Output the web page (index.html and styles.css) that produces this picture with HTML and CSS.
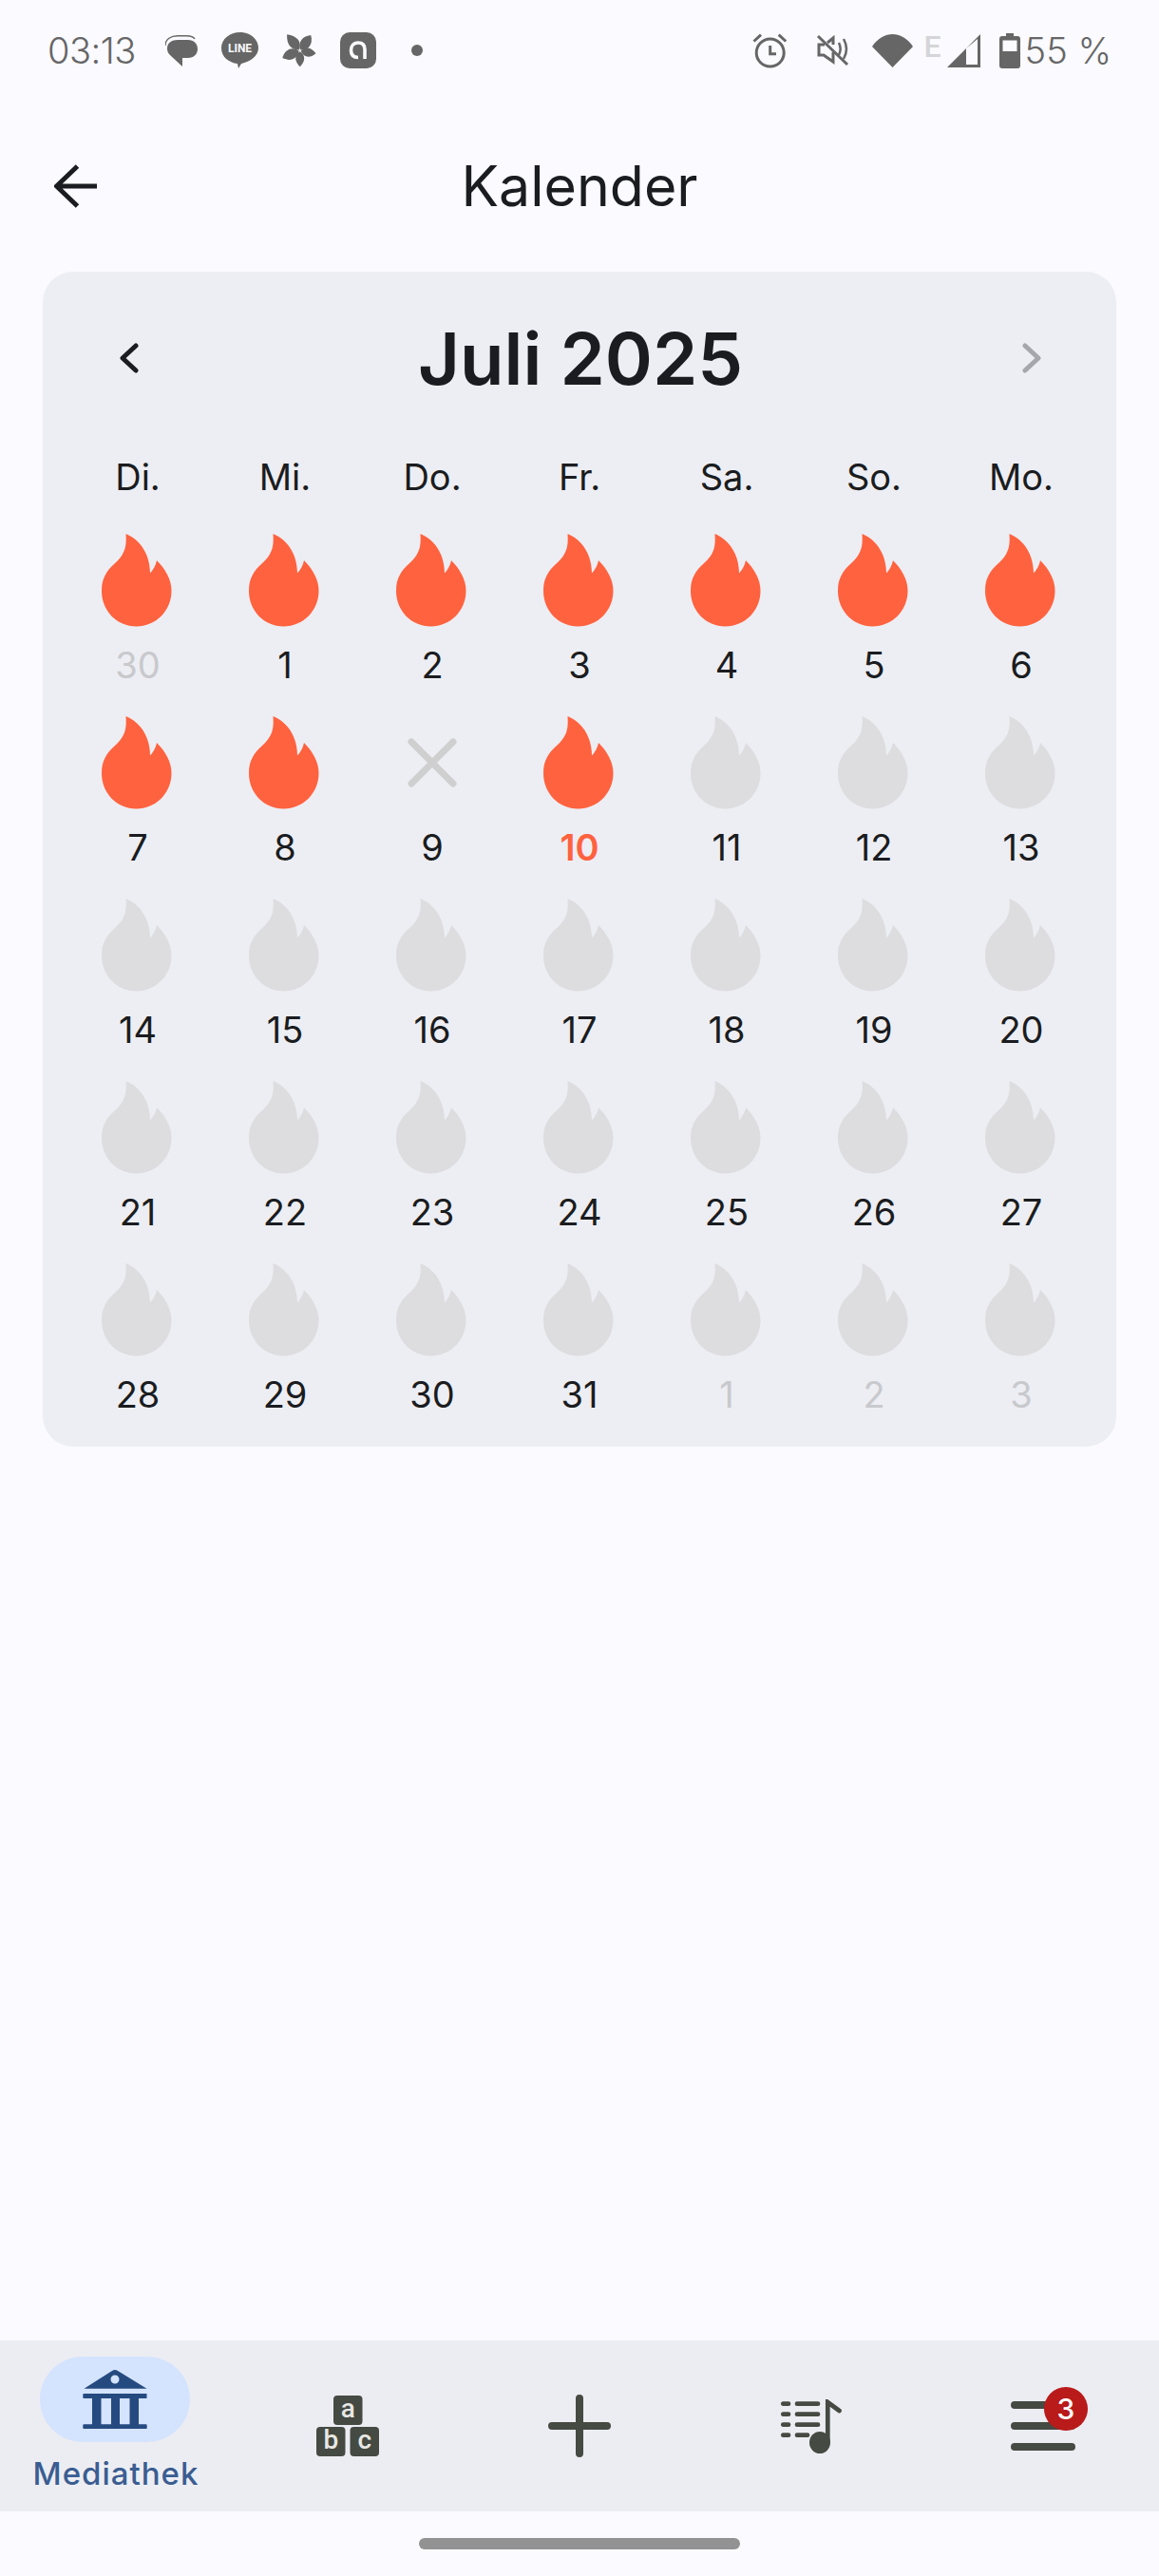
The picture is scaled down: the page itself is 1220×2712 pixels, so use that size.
FILE: index.html
```html
<!doctype html>
<html lang="de">
<head>
<meta charset="UTF-8" />
<meta name="viewport" content="width=device-width,initial-scale=1" />
<title>Kalender</title>
<link rel="stylesheet" href="styles.css">
</head>
<body>

<svg class="defs" width="0" height="0">
	<symbol id="flame" viewBox="0 0 74 98">
		<path d="M25.5 0C26 10 26.5 20 14 31C5 39 0 47 0 60C0 81 16 97.5 36.5 97.5C57 97.5 73.5 81 73.5 60C73.5 48 67 37 58 28C57 33 54.5 38 51 41.5C51 23 42 7 25.5 0Z" />
	</symbol>
</svg>

<div class="status">
	<span class="status-time">03:13</span>
	<svg class="st-chat" width="34" height="33" viewBox="0 0 34 33"><path d="M0 11C0 4 6 .7 13 .7H22C27 .7 30 2 31 4" fill="none" stroke="#666" stroke-width="1.4"/><path d="M2 14C2 8 7 5 13 5H24C30 5 34 9 34 14.500C34 20 30 24 24 24H18V33L5 21C3 19 2 17 2 14Z" fill="#666"/></svg>
	<svg class="st-line" width="39" height="38" viewBox="0 0 39 38"><path d="M19.500 0C30 0 39 7 39 16.500C39 25 30 31 21 33L18 38L17 33C8 32 0 26 0 16.500C0 7 9 0 19.500 0Z" fill="#666"/><text x="19.500" y="21" text-anchor="middle" class="line-text">LINE</text></svg>
	<svg class="st-flower" width="37" height="36" viewBox="-18.700 -18.300 37 36">
		<g fill="#666">
			<path d="M0 -1C-7 -6 -8 -13 -1 -21.700C7 -14 7 -6 0 -1Z" transform="rotate(-36)"/>
			<path d="M0 -1C-7 -6 -8 -13 -1 -20C7 -14 7 -6 0 -1Z" transform="rotate(38)"/>
			<path d="M0 -1C-6 -5 -6 -11 -1 -17C6 -12 6 -5 0 -1Z" transform="rotate(103)"/>
			<path d="M0 -1C-6 -5 -6 -11 0 -17C6 -11 6 -5 0 -1Z" transform="rotate(180)"/>
			<path d="M0 -1C-7 -6 -8 -13 -1 -20C7 -14 7 -6 0 -1Z" transform="rotate(250)"/>
		</g>
	</svg>
	<svg class="st-app" width="38" height="38" viewBox="0 0 38 38"><rect width="38" height="38" rx="10" fill="#666"/><path d="M26 28V18C26 13 23 11 19 11C14 11 11.500 15 11.500 19C11.500 24 14 26.500 19 26.500" fill="none" stroke="#fafaff" stroke-width="3.600"/></svg>
	<span class="st-dot"></span>

	<span class="status-right">
		<svg class="st-alarm" width="37" height="37" viewBox="0 0 37 37"><g fill="none" stroke="#666" stroke-width="3"><circle cx="18.700" cy="20.500" r="14.500"/><path d="M1.500 8.500L9 1.700M27.700 1.700L35.200 8.500M18.700 13V21.700H25"/></g></svg>
		<svg class="st-mute" width="36" height="34" viewBox="0 0 36 34"><g fill="none" stroke="#666" stroke-width="3"><path d="M2 2L33 32"/><path d="M9 11H3V22H8L18 29V19M12 9L18 4V11"/><path d="M24 9C26 13 26 18 24 22M29 5C33 12 33 19 29 26" stroke-width="2.500"/></g></svg>
		<svg class="st-wifi" width="43" height="35" viewBox="0 0 43 35"><path d="M0 13C6 4 14 0 21.500 0C29 0 37 4 43 13L21.500 35Z" fill="#666"/></svg>
		<span class="st-e">E</span>
		<svg class="st-signal" width="35" height="35" viewBox="0 0 35 35"><path d="M35 0V35H0ZM20 15V32H32V5Z" fill="#666" fill-rule="evenodd"/></svg>
		<svg class="st-batt" width="22" height="37" viewBox="0 0 22 37"><path d="M7 0H15V3H19C21 3 22 4 22 6V34C22 36 21 37 19 37H3C1 37 0 36 0 34V6C0 4 1 3 3 3H7ZM3.500 7.500V19H18.500V7.500Z" fill="#666" fill-rule="evenodd"/></svg>
		<span class="status-batt">55 %</span>
	</span>
</div>

<div class="header">
	<svg class="back" width="46" height="46" viewBox="0 0 46 46"><path d="M2.500 23H45M24.500 2L2.500 23L24.500 44" fill="none" stroke="#1a1c20" stroke-width="5"/></svg>
	<h1 class="header-title">Kalender</h1>
</div>

<div class="main">
	<div class="card">
		<div class="month">
			<svg class="chev" width="20" height="32" viewBox="0 0 20 32"><path d="M17 3L3 16L17 29" fill="none" stroke="#1a1c20" stroke-width="5" stroke-linecap="round" stroke-linejoin="round"/></svg>
			<h2 class="month-title">Juli 2025</h2>
			<svg class="chev chev-next" width="20" height="32" viewBox="0 0 20 32"><path d="M3 3L17 16L3 29" fill="none" stroke="#a6a7ab" stroke-width="5" stroke-linecap="round" stroke-linejoin="round"/></svg>
		</div>

		<div class="weekdays">
			<span>Di.</span><span>Mi.</span><span>Do.</span><span>Fr.</span><span>Sa.</span><span>So.</span><span>Mo.</span>
		</div>

		<div class="days">
			<div class="day on out"><svg class="flame"><use href="#flame"/></svg><span>30</span></div>
			<div class="day on"><svg class="flame"><use href="#flame"/></svg><span>1</span></div>
			<div class="day on"><svg class="flame"><use href="#flame"/></svg><span>2</span></div>
			<div class="day on"><svg class="flame"><use href="#flame"/></svg><span>3</span></div>
			<div class="day on"><svg class="flame"><use href="#flame"/></svg><span>4</span></div>
			<div class="day on"><svg class="flame"><use href="#flame"/></svg><span>5</span></div>
			<div class="day on"><svg class="flame"><use href="#flame"/></svg><span>6</span></div>

			<div class="day on"><svg class="flame"><use href="#flame"/></svg><span>7</span></div>
			<div class="day on"><svg class="flame"><use href="#flame"/></svg><span>8</span></div>
			<div class="day"><svg class="missed" width="52" height="52" viewBox="0 0 52 52"><path d="M4 4L48 48M48 4L4 48" fill="none" stroke="#cfcfcf" stroke-width="7" stroke-linecap="round"/></svg><span>9</span></div>
			<div class="day on today"><svg class="flame"><use href="#flame"/></svg><span>10</span></div>
			<div class="day"><svg class="flame"><use href="#flame"/></svg><span>11</span></div>
			<div class="day"><svg class="flame"><use href="#flame"/></svg><span>12</span></div>
			<div class="day"><svg class="flame"><use href="#flame"/></svg><span>13</span></div>

			<div class="day"><svg class="flame"><use href="#flame"/></svg><span>14</span></div>
			<div class="day"><svg class="flame"><use href="#flame"/></svg><span>15</span></div>
			<div class="day"><svg class="flame"><use href="#flame"/></svg><span>16</span></div>
			<div class="day"><svg class="flame"><use href="#flame"/></svg><span>17</span></div>
			<div class="day"><svg class="flame"><use href="#flame"/></svg><span>18</span></div>
			<div class="day"><svg class="flame"><use href="#flame"/></svg><span>19</span></div>
			<div class="day"><svg class="flame"><use href="#flame"/></svg><span>20</span></div>

			<div class="day"><svg class="flame"><use href="#flame"/></svg><span>21</span></div>
			<div class="day"><svg class="flame"><use href="#flame"/></svg><span>22</span></div>
			<div class="day"><svg class="flame"><use href="#flame"/></svg><span>23</span></div>
			<div class="day"><svg class="flame"><use href="#flame"/></svg><span>24</span></div>
			<div class="day"><svg class="flame"><use href="#flame"/></svg><span>25</span></div>
			<div class="day"><svg class="flame"><use href="#flame"/></svg><span>26</span></div>
			<div class="day"><svg class="flame"><use href="#flame"/></svg><span>27</span></div>

			<div class="day"><svg class="flame"><use href="#flame"/></svg><span>28</span></div>
			<div class="day"><svg class="flame"><use href="#flame"/></svg><span>29</span></div>
			<div class="day"><svg class="flame"><use href="#flame"/></svg><span>30</span></div>
			<div class="day"><svg class="flame"><use href="#flame"/></svg><span>31</span></div>
			<div class="day out"><svg class="flame"><use href="#flame"/></svg><span>1</span></div>
			<div class="day out"><svg class="flame"><use href="#flame"/></svg><span>2</span></div>
			<div class="day out"><svg class="flame"><use href="#flame"/></svg><span>3</span></div>
		</div>
	</div>
</div>

<div class="nav">
	<div class="nav-item active">
		<div class="pill">
			<svg width="68" height="62" viewBox="0 0 68 62"><path fill-rule="evenodd" d="M31 1C33 -.3 35 -.3 37 1L67.500 19.700H1.500ZM34 5.500A4.500 4.500 0 1 0 34 14.500A4.500 4.500 0 1 0 34 5.500Z" fill="#254a80"/><path d="M1 25H67.500V30H59V57.300H67C68 57.300 68 62 67 62H1C0 62 0 57.300 1 57.300H10V30H1C0 30 0 25 1 25ZM19.500 30V57.300H30V30ZM39 30V57.300H49.500V30Z" fill="#254a80" fill-rule="evenodd"/></svg>
		</div>
		<span class="nav-label">Mediathek</span>
	</div>
	<div class="nav-item">
		<svg class="blocks" width="66" height="64" viewBox="0 0 66 64">
			<rect x="18" width="30.500" height="31" rx="4" fill="#454a42"/>
			<rect y="33" width="30.500" height="31" rx="4" fill="#454a42"/>
			<rect x="35.500" y="33" width="30.500" height="31" rx="4" fill="#454a42"/>
			<text x="33.200" y="23" class="block-text">a</text>
			<text x="15.300" y="56" class="block-text">b</text>
			<text x="50.700" y="56" class="block-text">c</text>
		</svg>
	</div>
	<div class="nav-item">
		<svg width="66" height="66" viewBox="0 0 66 66"><path d="M4 33H62M33 4V62" fill="none" stroke="#454a42" stroke-width="8" stroke-linecap="round"/></svg>
	</div>
	<div class="nav-item">
		<svg width="64" height="57" viewBox="0 0 64 57"><g fill="none" stroke="#454a42" stroke-width="4.700" stroke-linecap="round"><path d="M2.300 4.700H8M17 4.700H39M2.300 15.700H8M17 15.700H39M2.300 26.700H8M17 26.700H39M2.300 37.700H8M17 37.700H28"/><path d="M49.300 46V3L61.500 12"/></g><ellipse cx="41" cy="45.500" rx="11" ry="11.500" fill="#454a42"/></svg>
	</div>
	<div class="nav-item">
		<div class="menu">
			<svg width="68" height="52" viewBox="0 0 68 52"><path d="M4 4H64M4 26H64M4 48H64" fill="none" stroke="#454a42" stroke-width="8" stroke-linecap="round"/></svg>
			<span class="badge">3</span>
		</div>
	</div>
</div>

<div class="home"><span class="home-bar"></span></div>

</body>
</html>
```

FILE: styles.css
```css
html,body,h1,h2{margin:0;padding:0;}

body{
	display: flex;
	flex-direction: column;
	width: 1220px;
	height: 2712px;
	overflow: hidden;
	background-color: #fafaff;
	color: #1a1c20;
	font-family: Inter, "Noto Sans", sans-serif;
}

svg{display: block;}
.defs{position: absolute;}

/* status bar */
.status{
	display: flex;
	align-items: center;
	height: 106px;
	padding: 0 50px;
	box-sizing: border-box;
	color: #666;
}
.status-time,
.status-batt{
	font-size: 38px;
	font-weight: 300;
	line-height: 40px;
}
.status-time{
	width: 124px;
	letter-spacing: -0.5px;
}
.st-line{margin-left: 25px;}
.st-flower{margin-left: 25px;}
.st-app{margin-left: 24px;}
.st-dot{
	width: 12px;
	height: 12px;
	margin-left: 37px;
	border-radius: 50%;
	background-color: #666;
}
.line-text{
	font-family: Roboto, sans-serif;
	font-size: 12px;
	font-weight: 700;
	fill: #fafaff;
}
.status-right{
	display: flex;
	align-items: center;
	margin-left: auto;
}
.st-mute{margin-left: 30px;}
.st-wifi{margin-left: 23px;}
.st-e{
	align-self: flex-start;
	margin-left: 12px;
	font-family: Roboto, sans-serif;
	font-size: 32px;
	font-weight: 500;
	line-height: 32px;
	color: #d5d5d8;
}
.st-signal{margin-left: 6px;}
.st-batt{margin-left: 20px;}
.status-batt{margin-left: 5px;}

/* title */
.header{
	display: grid;
	grid-template-columns: 1fr auto 1fr;
	align-items: center;
	height: 180px;
}
.back{margin-left: 57px;}
.header-title{
	font-size: 59px;
	font-weight: 400;
	line-height: 70px;
}

/* calendar card */
.main{flex: 1;}
.card{
	margin: 0 45px;
	padding: 0 22.5px 15px;
	border-radius: 32px;
	background-color: #edeef3;
}
.month{
	display: grid;
	grid-template-columns: 1fr auto 1fr;
	align-items: center;
	height: 182px;
	margin: 0 -22.5px;
	padding: 0 79px 0 81px;
}
.chev-next{justify-self: end;}
.month-title{
	font-size: 76px;
	font-weight: 600;
	line-height: 90px;
}
.weekdays,
.days{
	display: grid;
	grid-template-columns: repeat(7, 155px);
	text-align: center;
}
.weekdays{
	height: 68px;
	margin-bottom: 26px;
	font-size: 38px;
	line-height: 68px;
}
.days{row-gap: 14px;}
.day{
	display: flex;
	flex-direction: column;
	align-items: center;
	font-size: 38px;
	line-height: 80px;
}
.flame{
	width: 74px;
	height: 98px;
	margin-left: -3px;
	fill: #dddde0;
}
.missed{margin: 23px 0;}
.day.on .flame{fill: #ff623f;}
.day.out span{color: #c8c9cd;}
.day.today span{
	color: #ff623f;
	font-weight: 600;
}

/* bottom bar */
.nav{
	display: grid;
	grid-template-columns: repeat(5, 1fr);
	height: 180px;
	background-color: #ecedf2;
}
.nav-item{
	display: flex;
	flex-direction: column;
	align-items: center;
	justify-content: center;
}
.pill{
	display: flex;
	align-items: center;
	justify-content: center;
	width: 158px;
	height: 90px;
	margin-right: 2px;
	border-radius: 45px;
	background-color: #d4e3fe;
}
.nav-label{
	margin-top: 10px;
	font-size: 33px;
	font-weight: 500;
	letter-spacing: 1px;
	line-height: 46px;
	color: #3a5d92;
}
.blocks{overflow: visible;}
.block-text{
	font-family: Roboto, sans-serif;
	font-size: 28px;
	font-weight: 500;
	text-anchor: middle;
	fill: #e8e8e4;
}
.menu{position: relative;}
.badge{
	position: absolute;
	left: 35px;
	top: -15px;
	width: 46px;
	height: 46px;
	border-radius: 50%;
	background-color: #b91a1a;
	color: #fff;
	font-size: 30px;
	font-weight: 500;
	line-height: 46px;
	text-align: center;
}

.home{
	display: flex;
	align-items: center;
	justify-content: center;
	height: 68px;
}
.home-bar{
	width: 338px;
	height: 12px;
	border-radius: 6px;
	background-color: #929292;
}
```
